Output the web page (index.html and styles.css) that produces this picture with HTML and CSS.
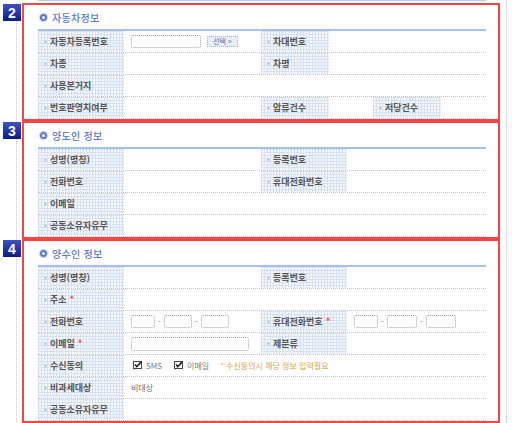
FILE: index.html
```html
<!DOCTYPE html>
<html lang="ko">
<head>
    <meta charset="UTF-8">
    <title>이전등록 신청정보</title>
    <link rel="stylesheet" href="styles.css">
</head>
<body>
    <div class="page">
        <div class="topline"></div>

        <!-- 2. 자동차정보 -->
        <section class="step">
            <div class="rail"><span class="badge">2</span></div>
            <div class="box">
                <h2 class="title"><span class="dot"></span>자동차정보</h2>
                <div class="grid">
                    <div class="row">
                        <div class="lbl">자동차등록번호</div>
                        <div class="val">
                            <span class="field w70"></span>
                            <button class="pick">선택 &gt;</button>
                        </div>
                        <div class="lbl sm">차대번호</div>
                        <div class="val fill"></div>
                    </div>
                    <div class="row">
                        <div class="lbl">차종</div>
                        <div class="val"></div>
                        <div class="lbl sm">차명</div>
                        <div class="val fill"></div>
                    </div>
                    <div class="row">
                        <div class="lbl">사용본거지</div>
                        <div class="val fill"></div>
                    </div>
                    <div class="row">
                        <div class="lbl">번호판영치여부</div>
                        <div class="val"></div>
                        <div class="lbl sm">압류건수</div>
                        <div class="val mini"></div>
                        <div class="lbl sm">저당건수</div>
                        <div class="val fill"></div>
                    </div>
                </div>
            </div>
        </section>

        <!-- 3. 양도인 정보 -->
        <section class="step">
            <div class="rail"><span class="badge">3</span></div>
            <div class="box">
                <h2 class="title"><span class="dot"></span>양도인 정보</h2>
                <div class="grid">
                    <div class="row">
                        <div class="lbl">성명(명칭)</div>
                        <div class="val"></div>
                        <div class="lbl">등록번호</div>
                        <div class="val fill"></div>
                    </div>
                    <div class="row">
                        <div class="lbl">전화번호</div>
                        <div class="val"></div>
                        <div class="lbl">휴대전화번호</div>
                        <div class="val fill"></div>
                    </div>
                    <div class="row">
                        <div class="lbl">이메일</div>
                        <div class="val fill"></div>
                    </div>
                    <div class="row">
                        <div class="lbl">공동소유자유무</div>
                        <div class="val fill"></div>
                    </div>
                </div>
            </div>
        </section>

        <!-- 4. 양수인 정보 -->
        <section class="step">
            <div class="rail"><span class="badge">4</span></div>
            <div class="box">
                <h2 class="title"><span class="dot"></span>양수인 정보</h2>
                <div class="grid">
                    <div class="row">
                        <div class="lbl">성명(명칭)</div>
                        <div class="val"></div>
                        <div class="lbl">등록번호</div>
                        <div class="val fill"></div>
                    </div>
                    <div class="row">
                        <div class="lbl">주소<i class="req">*</i></div>
                        <div class="val fill"></div>
                    </div>
                    <div class="row">
                        <div class="lbl">전화번호</div>
                        <div class="val">
                            <span class="field w24"></span><span class="dash">-</span><span class="field w28"></span><span class="dash">-</span><span class="field w28"></span>
                        </div>
                        <div class="lbl">휴대전화번호<i class="req">*</i></div>
                        <div class="val fill">
                            <span class="field w24"></span><span class="dash">-</span><span class="field w30"></span><span class="dash">-</span><span class="field w30"></span>
                        </div>
                    </div>
                    <div class="row">
                        <div class="lbl">이메일<i class="req">*</i></div>
                        <div class="val"><span class="field w118"></span></div>
                        <div class="lbl">제분류</div>
                        <div class="val fill"></div>
                    </div>
                    <div class="row">
                        <div class="lbl">수신동의</div>
                        <div class="val fill">
                            <label class="chk"><svg width="9" height="9" viewBox="0 0 9 9"><rect x="0.5" y="0.5" width="8" height="7" fill="#fff" stroke="#444"/><path d="M2 3.5 L3.8 5.5 L8.5 0.5" fill="none" stroke="#222" stroke-width="1.6"/><path d="M1 8.5 L3 6.5" stroke="#444"/></svg>SMS</label>
                            <label class="chk"><svg width="9" height="9" viewBox="0 0 9 9"><rect x="0.5" y="0.5" width="8" height="7" fill="#fff" stroke="#444"/><path d="M2 3.5 L3.8 5.5 L8.5 0.5" fill="none" stroke="#222" stroke-width="1.6"/><path d="M1 8.5 L3 6.5" stroke="#444"/></svg>이메일</label>
                            <span class="note">* 수신동의시 해당 정보 입력필요</span>
                        </div>
                    </div>
                    <div class="row">
                        <div class="lbl">비과세대상</div>
                        <div class="val fill"><span class="plain">비대상</span></div>
                    </div>
                    <div class="row">
                        <div class="lbl">공동소유자유무</div>
                        <div class="val fill"></div>
                    </div>
                </div>
            </div>
        </section>
    </div>
</body>
</html>
```

FILE: styles.css
```css
* {
    box-sizing: border-box;
}
body {
    margin: 0;
    background: #fff;
    font-family: "Noto Sans CJK KR", "Noto Sans", sans-serif;
    color: #444;
}
.page {
    width: 507px;
    background: linear-gradient(#c9c9c9 50%, transparent 0) right 0 / 1px 2px repeat-y;
}
.topline {
    margin-left: 38px;
    width: 448px;
    height: 1px;
    background: #b3c7ec;
    margin-bottom: 2px;
}
.step {
    display: flex;
}
.rail {
    width: 22px;
    flex: none;
    background: linear-gradient(#c9c9c9 50%, transparent 0) 16px 0 / 1px 2px repeat-y;
}
.badge {
    display: flex;
    align-items: center;
    justify-content: center;
    width: 18px;
    height: 17px;
    margin: 1px 0 0 3px;
    background: linear-gradient(#3c52c8, #0d1c86);
    color: #fff;
    font-family: "Liberation Sans", Arial, sans-serif;
    font-weight: bold;
    font-size: 14px;
}
.box {
    width: 478px;
    border: 2px solid #f74545;
    padding: 0 12px 0 14px;
    background: #fff;
}
.title {
    display: flex;
    align-items: center;
    gap: 3px;
    height: 24px;
    margin: 0;
    padding-left: 2px;
    font-size: 10px;
    font-weight: 500;
    color: #5a79c4;
    letter-spacing: 0.3px;
}
.dot {
    width: 7px;
    height: 7px;
    border-radius: 50%;
    border: 2px solid #5a79c4;
    box-shadow: 0 0 0 1px #c4d1ee;
    margin-right: 2px;
}
.grid {
    border-top: 2px solid #a8bfec;
}
.row {
    display: flex;
    height: 22px;
    border-bottom: 1px dotted #c4c4c4;
}
.lbl {
    display: flex;
    align-items: center;
    width: 86px;
    flex: none;
    padding-left: 6px;
    font-size: 9px;
    font-weight: bold;
    color: #555;
    background-color: #f5f8fc;
    background-image:
        linear-gradient(90deg, #d6e0ef 1px, transparent 1px),
        linear-gradient(#d6e0ef 1px, transparent 1px);
    background-size: 3px 3px;
}
.lbl::before {
    content: "·";
    color: #9aa3b5;
    margin-right: 3px;
}
.lbl.sm {
    width: 68px;
}
.req {
    font-style: normal;
    color: #f04a4a;
    margin-left: 3px;
}
.val {
    display: flex;
    align-items: center;
    width: 137px;
    flex: none;
    padding-left: 7px;
}
.val.fill {
    flex: 1;
    width: auto;
}
.val.mini {
    width: 44px;
}
.field {
    display: inline-block;
    height: 13px;
    border: 1px dotted #a9a9a9;
    border-radius: 2px;
    background: #fff;
}
.w24 { width: 24px; }
.w28 { width: 28px; }
.w30 { width: 30px; }
.w70 { width: 70px; }
.w118 { width: 118px; height: 14px; }
.dash {
    width: 9px;
    text-align: center;
    font-size: 8px;
    color: #888;
}
.pick {
    margin-left: 6px;
    height: 11px;
    width: 31px;
    padding: 0;
    border: 1px dotted #9fb5dc;
    background: #e6eef9;
    color: #5b6f9c;
    font-family: inherit;
    font-size: 7px;
    line-height: 9px;
}
.chk {
    display: flex;
    align-items: center;
    gap: 4px;
    margin: 0 10px 0 2px;
    font-size: 8px;
    color: #808080;
}
.note {
    margin-left: 1px;
    font-size: 8px;
    color: #d7a44a;
}
.plain {
    font-size: 8px;
    color: #6c6c6c;
}
```
